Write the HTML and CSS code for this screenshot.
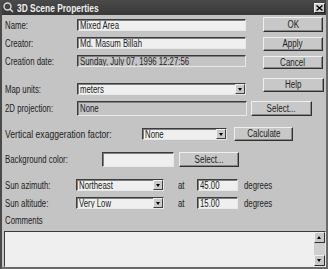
FILE: index.html
```html
<!DOCTYPE html>
<html>
<head>
<meta charset="utf-8">
<link rel="stylesheet" href="styles.css">
</head>
<body>
<div class="window">
  <div class="titlebar">
    <svg class="ticon" width="11" height="11" viewBox="0 0 11 11">
      <circle cx="4.5" cy="4.5" r="3.5" fill="none" stroke="#d8d8d8" stroke-width="1.4"/>
      <line x1="7" y1="7" x2="10" y2="10" stroke="#d8d8d8" stroke-width="1.6"/>
    </svg>
    <span class="title"><span class="tx">3D Scene Properties</span></span>
    <span class="close">
      <svg width="7" height="6" viewBox="0 0 7 6"><path d="M0.5 0.5 L6.5 5.5 M6.5 0.5 L0.5 5.5" stroke="#000" stroke-width="1.4"/></svg>
    </span>
  </div>
  <div class="content">
    <div class="top">
      <div class="leftcol">
        <div class="row r-name"><span class="label w74"><span class="tx">Name:</span></span><span class="field edit w169"><span class="tx">Mixed Area</span></span></div>
        <div class="row r-creator"><span class="label w74"><span class="tx">Creator:</span></span><span class="field edit w169"><span class="tx">Md. Masum Billah</span></span></div>
        <div class="row r-date"><span class="label w74"><span class="tx">Creation date:</span></span><span class="field ro w169"><span class="tx">Sunday, July 07, 1996 12:27:56</span></span></div>
        <div class="row r-units"><span class="label w74"><span class="tx">Map units:</span></span><span class="field edit combo w169"><span class="tx">meters</span><span class="arrow"></span></span></div>
      </div>
      <div class="rightcol">
        <button class="btn b-ok"><span class="txc">OK</span></button>
        <button class="btn b-apply"><span class="txc">Apply</span></button>
        <button class="btn b-cancel"><span class="txc">Cancel</span></button>
        <button class="btn b-help"><span class="txc">Help</span></button>
      </div>
    </div>
    <div class="row r-proj"><span class="label w74"><span class="tx">2D projection:</span></span><span class="field ro w170"><span class="tx">None</span></span><button class="btn b-sel1"><span class="txc">Select...</span></button></div>
    <div class="row r-vert"><span class="label w137"><span class="tx wide">Vertical exaggeration factor:</span></span><span class="field edit combo w85"><span class="tx">None</span><span class="arrow"></span></span><button class="btn b-calc"><span class="txc">Calculate</span></button></div>
    <div class="row r-bg"><span class="label w99"><span class="tx">Background color:</span></span><span class="field edit w72"></span><button class="btn b-sel2"><span class="txc">Select...</span></button></div>
    <div class="row r-az"><span class="label w73"><span class="tx">Sun azimuth:</span></span><span class="field edit combo w88"><span class="tx">Northeast</span><span class="arrow"></span></span><span class="at"><span class="tx">at</span></span><span class="field edit w41"><span class="tx">45.00</span></span><span class="deg"><span class="tx">degrees</span></span></div>
    <div class="row r-alt"><span class="label w73"><span class="tx">Sun altitude:</span></span><span class="field edit combo w88"><span class="tx">Very Low</span><span class="arrow"></span></span><span class="at"><span class="tx">at</span></span><span class="field edit w41"><span class="tx">15.00</span></span><span class="deg"><span class="tx">degrees</span></span></div>
    <div class="comments-label"><span class="tx">Comments</span></div>
    <div class="textarea">
      <div class="scrollbar">
        <span class="sb-btn"><span class="up"></span></span>
        <span class="sb-track"></span>
        <span class="sb-btn"><span class="down"></span></span>
      </div>
    </div>
  </div>
</div>
</body>
</html>
```
FILE: styles.css
```css
* { box-sizing: border-box; }
html, body { margin: 0; padding: 0; background: #c4c4c4; }
body {
  font-family: "Liberation Sans", Arial, sans-serif;
  font-size: 10px;
  color: #222222;
}
.tx {
  display: inline-block;
  white-space: nowrap;
  transform: scaleX(0.78);
  transform-origin: 0 50%;
}
.tx.wide { transform: scaleX(0.86); }
.txc {
  display: inline-block;
  white-space: nowrap;
  transform: scaleX(0.8);
  transform-origin: 50% 50%;
}
.window {
  width: 328px;
  height: 269px;
  background: #c4c4c4;
  border-left: 2px solid #4a4a4a;
  border-right: 2px solid #6a6a6a;
  border-bottom: 2px solid #6a6a6a;
  overflow: hidden;
  display: flex;
  flex-direction: column;
}
.titlebar {
  height: 15px;
  margin-left: -2px;
  margin-right: -2px;
  background: linear-gradient(#4a4a4a, #383838);
  display: flex;
  align-items: center;
  padding-left: 3px;
  padding-right: 3px;
}
.ticon { flex: none; }
.title {
  color: #eeeeee;
  font-weight: bold;
  font-size: 10.5px;
  margin-left: 3px;
  flex: 1;
}
.title .tx { transform: scaleX(0.8); }
.close {
  width: 11px;
  height: 10px;
  background: #d0d0d0;
  border-top: 1px solid #f0f0f0;
  border-left: 1px solid #f0f0f0;
  border-right: 1px solid #202020;
  border-bottom: 1px solid #202020;
  display: flex;
  align-items: center;
  justify-content: center;
}
.content {
  padding-left: 1px;
  padding-right: 1px;
  display: flex;
  flex-direction: column;
}
.top {
  display: flex;
  margin-top: 2px;
}
.leftcol {
  width: 260px;
  display: flex;
  flex-direction: column;
}
.rightcol {
  display: flex;
  flex-direction: column;
}
.row {
  display: flex;
  align-items: center;
}
.label { padding-left: 2px; flex: none; white-space: nowrap; }
.w73 { width: 73px; }
.w74 { width: 74px; }
.w99 { width: 99px; }
.w137 { width: 139px; }
.w169 { width: 169px; }
.w170 { width: 170px; }
.w85 { width: 85px; }
.w72 { width: 72px; }
.w88 { width: 88px; }
.w41 { width: 41px; }

.field {
  flex: none;
  position: relative;
  height: 100%;
  display: flex;
  align-items: center;
  padding-left: 2px;
  white-space: nowrap;
  overflow: hidden;
  border-top: 1px solid #3c3c3c;
  border-left: 1px solid #3c3c3c;
  border-right: 1px solid #e8e8e8;
  border-bottom: 1px solid #e8e8e8;
  box-shadow: inset 1px 1px 0 #808080;
}
.edit { background: #efefef; }
.ro { background: #c4c4c4; }
.combo .arrow {
  position: absolute;
  right: 0;
  top: 0;
  bottom: 0;
  width: 10px;
  background: #cacaca;
  border-left: 1px solid #f0f0f0;
  border-top: 1px solid #f0f0f0;
  border-right: 1px solid #404040;
  border-bottom: 1px solid #404040;
}
.combo .arrow::after {
  content: "";
  position: absolute;
  left: 2px;
  top: 3px;
  border-left: 2px solid transparent;
  border-right: 2px solid transparent;
  border-top: 3px solid #000;
}

.btn {
  font-family: "Liberation Sans", Arial, sans-serif;
  font-size: 10px;
  color: #222222;
  background: #c8c8c8;
  padding: 0;
  margin: 0;
  border-top: 1px solid #efefef;
  border-left: 1px solid #efefef;
  border-right: 1px solid #303030;
  border-bottom: 1px solid #303030;
  box-shadow: inset -1px -1px 0 #888888;
  flex: none;
  line-height: 1;
}

.r-name { height: 12px; margin-top: 2px; }
.r-creator { height: 12px; margin-top: 6px; }
.r-date { height: 12px; margin-top: 6px; }
.r-units { height: 12px; margin-top: 16px; }

.b-ok { width: 60px; height: 15px; }
.b-apply { width: 60px; height: 14px; margin-top: 5px; }
.b-cancel { width: 60px; height: 13px; margin-top: 5px; }
.b-help { width: 61px; height: 14px; margin-top: 9px; }

.r-proj { height: 15px; margin-top: 6px; }
.b-sel1 { width: 61px; height: 15px; margin-left: 4px; }

.r-vert { height: 14px; margin-top: 11px; }
.r-vert .field { height: 12px; }
.b-calc { width: 59px; height: 14px; margin-left: 7px; }

.r-bg { height: 15px; margin-top: 11px; }
.b-sel2 { width: 60px; height: 15px; margin-left: 5px; }

.r-az { height: 12px; margin-top: 12px; }
.r-alt { height: 12px; margin-top: 6px; }
.at { width: 33px; padding-left: 14px; flex: none; }
.deg { margin-left: 6px; }

.comments-label { padding-left: 2px; margin-top: 5px; height: 14px; line-height: 14px; }
.textarea {
  margin-top: 3px;
  height: 36px;
  width: 322px;
  margin-left: 1px;
  background: #efefef;
  border-top: 1px solid #3c3c3c;
  border-left: 1px solid #3c3c3c;
  border-right: 1px solid #e8e8e8;
  border-bottom: 1px solid #e8e8e8;
  display: flex;
  justify-content: flex-end;
}
.scrollbar {
  width: 11px;
  display: flex;
  flex-direction: column;
  background: #c4c4c4;
}
.sb-btn {
  height: 11px;
  position: relative;
  background: #c8c8c8;
  border-top: 1px solid #efefef;
  border-left: 1px solid #efefef;
  border-right: 1px solid #303030;
  border-bottom: 1px solid #303030;
}
.sb-track { flex: 1; background: #cfcfcf; }
.up, .down {
  position: absolute;
  left: 2px;
  top: 3px;
  border-left: 2px solid transparent;
  border-right: 2px solid transparent;
}
.up { border-bottom: 3px solid #000; }
.down { border-top: 3px solid #000; }
```
